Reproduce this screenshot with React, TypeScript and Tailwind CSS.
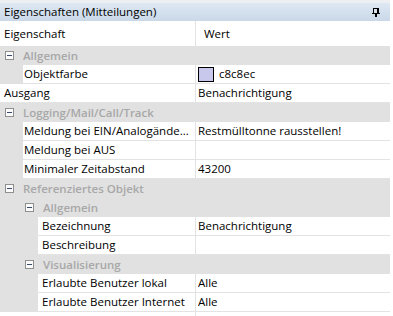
import React from "react";

type Row =
  | { kind: "cat"; level: number; label: string }
  | { kind: "item"; level: number; label: string; value?: string; swatch?: string };

const rows: Row[] = [
  { kind: "cat", level: 0, label: "Allgemein" },
  { kind: "item", level: 1, label: "Objektfarbe", value: "c8c8ec", swatch: "#c8c8ec" },
  { kind: "item", level: 0, label: "Ausgang", value: "Benachrichtigung" },
  { kind: "cat", level: 0, label: "Logging/Mail/Call/Track" },
  { kind: "item", level: 1, label: "Meldung bei EIN/Analogände...", value: "Restmülltonne rausstellen!" },
  { kind: "item", level: 1, label: "Meldung bei AUS", value: "" },
  { kind: "item", level: 1, label: "Minimaler Zeitabstand", value: "43200" },
  { kind: "cat", level: 0, label: "Referenziertes Objekt" },
  { kind: "cat", level: 1, label: "Allgemein" },
  { kind: "item", level: 2, label: "Bezeichnung", value: "Benachrichtigung" },
  { kind: "item", level: 2, label: "Beschreibung", value: "" },
  { kind: "cat", level: 1, label: "Visualisierung" },
  { kind: "item", level: 2, label: "Erlaubte Benutzer lokal", value: "Alle" },
  { kind: "item", level: 2, label: "Erlaubte Benutzer Internet", value: "Alle" },
];

const indentW = ["w-0", "w-[23px]", "w-[38px]"];
const catPad = ["pl-[5px]", "pl-[25px]"];

function MinusBox() {
  return (
    <span className="flex h-[9px] w-[9px] shrink-0 items-center justify-center border border-[#8e8f8f] bg-[#fbfbfb]">
      <span className="h-px w-[5px] bg-[#3a4a6a]" />
    </span>
  );
}

function PinIcon() {
  return (
    <svg width="8" height="9" viewBox="0 0 8 9" shapeRendering="crispEdges">
      <rect x="0" y="5" width="8" height="1" fill="#000" />
      <rect x="1" y="0" width="1" height="5" fill="#000" />
      <rect x="1" y="0" width="5" height="1" fill="#000" />
      <rect x="5" y="0" width="2" height="5" fill="#000" />
      <rect x="3" y="6" width="2" height="3" fill="#000" />
    </svg>
  );
}

export default function App() {
  return (
    <div className="h-[316px] w-[393px] overflow-hidden bg-white text-[11.5px] text-black [font-family:'Open_Sans',sans-serif]">
      <div className="w-[390px]">
        <div className="h-[3px] bg-[#eeeff2]" />
        <div className="flex h-[18px] items-center justify-between bg-gradient-to-b from-[#dee8f3] to-[#c9d8e8] pl-[4px] pr-[10px] leading-none">
          <span>Eigenschaften (Mitteilungen)</span>
          <PinIcon />
        </div>
        <div className="flex h-[25px] items-center">
          <div className="flex h-full w-[196px] items-center border-r border-[#e3e3e3] pl-[4px]">Eigenschaft</div>
          <div className="pl-[8px]">Wert</div>
        </div>
        {rows.map((r, i) =>
          r.kind === "cat" ? (
            <div key={i} className={`flex h-[19px] items-center gap-[9px] bg-[#e1e1e1] ${catPad[r.level]}`}>
              <MinusBox />
              <span className="font-semibold text-[#a8a8a8]">{r.label}</span>
            </div>
          ) : (
            <div key={i} className="flex h-[19px]">
              <div className={`shrink-0 bg-[#e1e1e1] ${indentW[r.level]}`} />
              <div className="flex min-w-0 flex-1 border-b border-[#e3e3e3]">
                <div className={`flex min-w-0 items-center border-r border-[#e3e3e3] ${r.level === 0 ? "w-[196px] pl-[4px]" : r.level === 1 ? "w-[173px] pl-[1px]" : "w-[158px] pl-[4px]"}`}>
                  <span className="whitespace-nowrap">{r.label}</span>
                </div>
                <div className="flex min-w-0 flex-1 items-center gap-[5px] pl-[2px]">
                  {r.swatch && (
                    <span className="h-[15px] w-[16px] shrink-0 border border-black bg-[#c8c8ec]" />
                  )}
                  <span className="truncate">{r.value}</span>
                </div>
              </div>
            </div>
          )
        )}
        <div className="flex h-[6px]">
          <div className="w-[196px] border-r border-[#e3e3e3]" />
        </div>
      </div>
    </div>
  );
}
